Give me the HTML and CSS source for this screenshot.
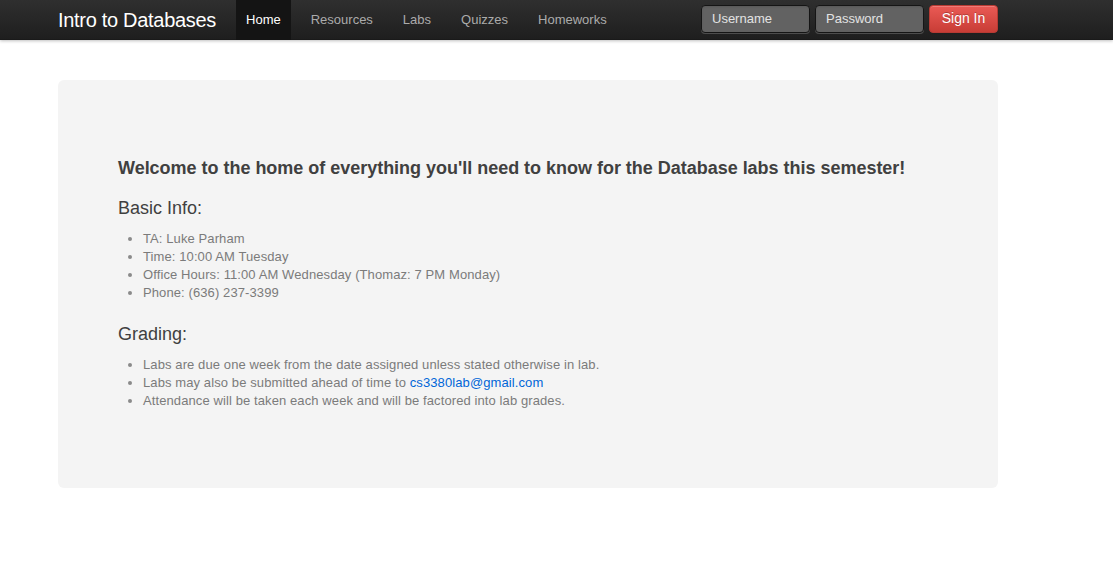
FILE: index.html
```html
<!DOCTYPE html>
<html>
<head>
<meta charset="utf-8">
<title>Intro to Databases</title>
<link rel="stylesheet" href="styles.css">
</head>
<body>
<div class="topbar">
  <div class="container topbar-inner">
    <a class="brand" href="#">Intro to Databases</a>
    <ul class="nav">
      <li class="active"><a href="#">Home</a></li>
      <li><a href="#">Resources</a></li>
      <li><a href="#">Labs</a></li>
      <li><a href="#">Quizzes</a></li>
      <li><a href="#">Homeworks</a></li>
    </ul>
    <form class="login">
      <input class="field" type="text" placeholder="Username">
      <input class="field" type="password" placeholder="Password">
      <button class="btn-danger" type="button">Sign In</button>
    </form>
  </div>
</div>
<div class="container main">
  <div class="hero">
    <h3 class="welcome">Welcome to the home of everything you'll need to know for the Database labs this semester!</h3>
    <h3 class="section">Basic Info:</h3>
    <ul class="info">
      <li>TA: Luke Parham</li>
      <li>Time: 10:00 AM Tuesday</li>
      <li>Office Hours: 11:00 AM Wednesday (Thomaz: 7 PM Monday)</li>
      <li>Phone: (636) 237-3399</li>
    </ul>
    <h3 class="section">Grading:</h3>
    <ul class="info last">
      <li>Labs are due one week from the date assigned unless stated otherwise in lab.</li>
      <li>Labs may also be submitted ahead of time to <a href="#">cs3380lab@gmail.com</a></li>
      <li>Attendance will be taken each week and will be factored into lab grades.</li>
    </ul>
  </div>
</div>
</body>
</html>
```

FILE: styles.css
```css
* { box-sizing: border-box; }
html, body { margin: 0; padding: 0; }
body {
  font-family: "Liberation Sans", Arial, Helvetica, sans-serif;
  font-size: 13px;
  line-height: 18px;
  color: #404040;
  background: #fff;
}
.container {
  width: 940px;
  margin-left: 58px;
}
.topbar {
  height: 40px;
  background-color: #222;
  background-image: linear-gradient(to bottom, #2f2f2f, #1e1e1e);
  box-shadow: 0 1px 3px rgba(0,0,0,0.25), inset 0 -1px 0 rgba(0,0,0,0.1);
}
.topbar-inner {
  display: flex;
  align-items: stretch;
  height: 40px;
}
.brand {
  font-size: 20px;
  line-height: 40px;
  color: #fff;
  text-decoration: none;
  padding: 0 20px;
  margin-left: -20px;
  letter-spacing: -0.3px;
}
.nav {
  display: flex;
  gap: 10px;
  list-style: none;
  margin: 0;
  padding: 0;
}
.nav a {
  display: block;
  padding: 0 10px;
  line-height: 40px;
  height: 40px;
  color: #ababab;
  text-decoration: none;
  font-size: 13px;
}
.nav .active a {
  background-color: #141414;
  color: #fff;
}
.login {
  margin: 5px 0 0 auto;
  display: flex;
  align-items: flex-start;
  gap: 5px;
}
.field {
  width: 109px;
  height: 28px;
  margin: 0;
  padding: 4px 10px 6px;
  font-family: inherit;
  font-size: 13px;
  color: #eee;
  background: #626262;
  border: 1px solid #151515;
  border-radius: 4px;
  box-shadow: inset 0 1px 2px rgba(0,0,0,0.1), 0 1px 0 rgba(255,255,255,0.2);
}
.field::placeholder { color: #e2e2e2; }
.btn-danger {
  width: 69px;
  height: 28px;
  margin: 0;
  padding: 0 0 2px;
  font-family: inherit;
  font-size: 14px;
  color: #fff;
  background-color: #d9463f;
  background-image: linear-gradient(to bottom, #ea5a55, #c83d36);
  border: 1px solid #b73a33;
  border-radius: 4px;
  text-shadow: 0 -1px 0 rgba(0,0,0,0.25);
  box-shadow: inset 0 1px 0 rgba(255,255,255,0.2), 0 1px 2px rgba(0,0,0,0.05);
}
.main {
  padding-top: 40px;
}
.hero {
  background: #f4f4f4;
  border-radius: 6px;
  padding: 60px;
}
h3 {
  font-size: 18px;
  line-height: 27px;
  color: #404040;
  margin: 0;
}
.welcome {
  font-weight: bold;
  margin: 15px 0 13px;
  letter-spacing: -0.02px;
}
.section {
  font-weight: normal;
  margin: 0 0 8px;
}
.info {
  margin: 0 0 19px 25px;
  padding: 0;
  color: #7b7b7b;
  letter-spacing: 0.1px;
}
.info.last { margin-bottom: 18px; }
.info li { line-height: 18px; }
.info li::marker { color: #8a8a8a; }
.info a {
  color: #0066d8;
  text-decoration: none;
}
```
